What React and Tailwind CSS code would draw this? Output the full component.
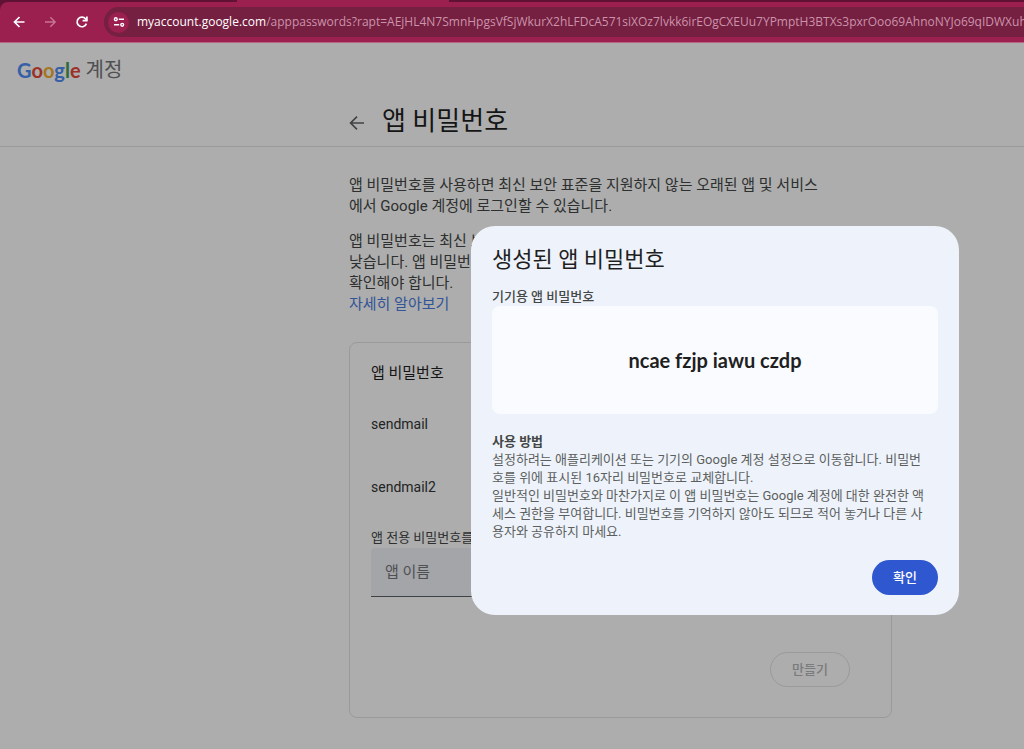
import React from 'react';

const accountUrl = {
  host: 'myaccount.google.com',
  path: '/apppasswords?rapt=AEjHL4N7SmnHpgsVfSjWkurX2hLFDcA571siXOz7lvkk6irEOgCXEUu7YPmptH3BTXs3pxrOoo69AhnoNYJo69qIDWXuh6',
};

const appPasswords = ['sendmail', 'sendmail2'];

const BrowserBar = () => {
  return (
    <div className="bg-[#5f1233]">
      <div className="flex h-[2px]">
        <div className="w-[237px]" />
        <div className="w-[212px] bg-[#9b1f4f]" />
      </div>
      <div className="flex h-[41px] items-center overflow-hidden rounded-tl-lg border-b border-[#bb6384] bg-[#9b1f4f] pl-3">
        <button type="button" aria-label="뒤로" className="shrink-0 text-white">
          <svg width="16" height="16" viewBox="0 0 16 16" fill="none" stroke="currentColor" strokeWidth="1.7">
            <path d="M12.5 8H2.7M7.5 3l-5 5 5 5" />
          </svg>
        </button>
        <button type="button" aria-label="앞으로" className="ml-[15px] shrink-0 text-[#c77592]">
          <svg width="16" height="16" viewBox="0 0 16 16" fill="none" stroke="currentColor" strokeWidth="1.5">
            <path d="M2 8h9.8M7.3 3.2 12.1 8l-4.8 4.8" />
          </svg>
        </button>
        <button type="button" aria-label="새로고침" className="ml-[15px] shrink-0 text-white">
          <svg width="16" height="16" viewBox="0 0 16 16" fill="none" stroke="currentColor" strokeWidth="1.7">
            <path d="M12.4 9.6A4.8 4.8 0 1 1 11.6 4.9l1.2 1.3" />
            <path d="M12.9 2.4v4.2H8.6" />
          </svg>
        </button>
        <div className="ml-[14px] flex h-[30px] flex-1 items-center overflow-hidden rounded-l-full bg-[#751f41] pl-[4px]">
          <button
            type="button"
            aria-label="사이트 정보 보기"
            className="flex h-[21px] w-[21px] shrink-0 items-center justify-center rounded-full bg-[#9b1f4f] text-white"
          >
            <svg width="12" height="12" viewBox="0 0 12 12" fill="none" stroke="currentColor" strokeWidth="1.4">
              <circle cx="2.8" cy="3.2" r="1.4" />
              <path d="M5.8 3.2H11M1 8.8h5.2" />
              <circle cx="9.2" cy="8.8" r="1.4" />
            </svg>
          </button>
          <p className="ml-[8px] whitespace-nowrap font-['Open_Sans',sans-serif] text-[12px] leading-[18px] text-[#cb94ab]">
            <span className="text-white">{accountUrl.host}</span>
            {accountUrl.path}
          </p>
        </div>
      </div>
    </div>
  );
};

const GoogleLogo = () => {
  return (
    <span className="font-['Lato',sans-serif] text-[20px] font-bold leading-[26px]">
      <span className="text-[#4f8df5]">G</span>
      <span className="text-[#e8483b]">o</span>
      <span className="text-[#f2b02e]">o</span>
      <span className="text-[#4f8df5]">g</span>
      <span className="text-[#3f9e56]">l</span>
      <span className="text-[#e8483b]">e</span>
    </span>
  );
};

const PasswordDialog = () => {
  return (
    <div className="absolute inset-0 flex items-start justify-end bg-black/32 pt-[183px] pr-[65px]">
      <div
        role="dialog"
        aria-modal="true"
        aria-labelledby="dialog-title"
        className="w-[488px] rounded-3xl bg-[#eef3fb] px-[21px] pt-[18px] pb-5"
      >
        <h2 id="dialog-title" className="text-[22px] leading-[32px] text-[#1f1f1f]">
          생성된 앱 비밀번호
        </h2>
        <p className="mt-3 text-[13px] font-medium leading-[18px] text-[#444746]">기기용 앱 비밀번호</p>
        <div className="flex h-[108px] items-center justify-center rounded-lg bg-[#f9fbff]">
          <strong className="font-['Lato',sans-serif] text-[20px] font-bold leading-[28px] text-[#1f1f1f]">
            ncae fzjp iawu czdp
          </strong>
        </div>
        <div className="mt-[19px] text-[13px] leading-[18px] text-[#5c5f5e]">
          <h3 className="font-bold text-[#444746]">사용 방법</h3>
          <p>
            설정하려는 애플리케이션 또는 기기의 Google 계정 설정으로 이동합니다. 비밀번
            <br />
            호를 위에 표시된 16자리 비밀번호로 교체합니다.
          </p>
          <p>
            일반적인 비밀번호와 마찬가지로 이 앱 비밀번호는 Google 계정에 대한 완전한 액
            <br />
            세스 권한을 부여합니다. 비밀번호를 기억하지 않아도 되므로 적어 놓거나 다른 사
            <br />
            용자와 공유하지 마세요.
          </p>
        </div>
        <div className="mt-[19px] flex justify-end">
          <button
            type="button"
            className="h-[35px] w-[66px] rounded-full bg-[#2f57cf] text-[13px] font-medium leading-[18px] text-white"
          >
            확인
          </button>
        </div>
      </div>
    </div>
  );
};

const App = () => {
  return (
    <div className="flex min-h-screen flex-col overflow-hidden bg-white font-['Roboto','Noto_Sans_CJK_KR',sans-serif]">
      <BrowserBar />
      <div className="relative flex-1">
        <header className="border-b border-[#e3e3e3] pb-2">
          <div className="flex items-center gap-[5px] pt-[14px] pl-[17px]">
            <GoogleLogo />
            <span className="text-[20px] leading-[26px] text-[#757779]">계정</span>
          </div>
          <div className="mt-[21px] flex items-center pl-[349px]">
            <a href="#security" aria-label="뒤로" className="mt-1 text-[#5f6368]">
              <svg width="16" height="16" viewBox="0 0 16 16" fill="none" stroke="currentColor" strokeWidth="1.7">
                <path d="M15 8H2M8 1.6 1.6 8 8 14.4" />
              </svg>
            </a>
            <h1 className="ml-[17px] text-[26px] leading-[34px] text-[#1f1f1f]">앱 비밀번호</h1>
          </div>
        </header>

        <main className="ml-[349px] max-w-[543px] pt-7 pb-8">
          <p className="whitespace-nowrap text-[15px] leading-[21px] text-[#444746]">
            앱 비밀번호를 사용하면 최신 보안 표준을 지원하지 않는 오래된 앱 및 서비스
            <br />
            에서 Google 계정에 로그인할 수 있습니다.
          </p>
          <p className="mt-[14px] whitespace-nowrap text-[15px] leading-[21px] text-[#444746]">
            앱 비밀번호는 최신 보안 표준을 사용하는 최신 앱 및 서비스보다 보안 수준이
            <br />
            낮습니다. 앱 비밀번호를 만들기 전에 앱에서 로그인하는 데 필요한지
            <br />
            확인해야 합니다.
            <br />
            <a href="#learn-more" className="text-[#4a7de0]">
              자세히 알아보기
            </a>
          </p>

          <section className="mt-[27px] rounded-lg border border-[#e3e3e3] pt-5 pr-[41px] pb-[30px] pl-[21px]">
            <h2 className="text-[15px] leading-[21px] text-[#1f1f1f]">앱 비밀번호</h2>
            <ul className="mt-[9px]">
              {appPasswords.map((name) => (
                <li key={name} className="flex h-[63px] items-center text-[14px] leading-[21px] text-[#333535]">
                  {name}
                </li>
              ))}
            </ul>
            <label htmlFor="app-name" className="mt-[10px] block text-[13px] leading-[18px] text-[#444746]">
              앱 전용 비밀번호를 새로 만들려면 아래에 앱 이름을 입력하세요.
            </label>
            <input
              id="app-name"
              type="text"
              placeholder="앱 이름"
              className="mt-px block h-[49px] w-full rounded-t border-b border-[#5f6368] bg-[#f0f4f9] px-[14px] text-[15px] leading-[21px] placeholder:text-[#757779]"
            />
            <div className="mt-[55px] flex justify-end">
              <button
                type="button"
                disabled
                className="h-[35px] w-[80px] rounded-full border border-[#e3e3e3] text-[13px] font-medium leading-[18px] text-[#b4b6b8]"
              >
                만들기
              </button>
            </div>
          </section>
        </main>

        <PasswordDialog />
      </div>
    </div>
  );
};

export default App;
